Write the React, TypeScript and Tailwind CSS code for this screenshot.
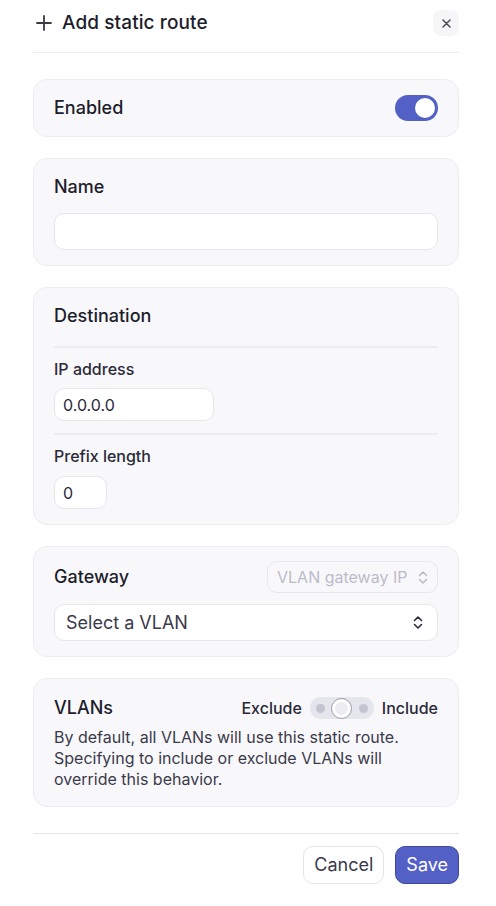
import React from "react";

function UpDown({ className = "" }: { className?: string }) {
  return (
    <svg width="10" height="15" viewBox="0 0 10 15" fill="none" className={className}>
      <path d="M1.5 5.5L5 2l3.5 3.5M1.5 9.5L5 13l3.5-3.5" stroke="currentColor" strokeWidth="1.6" strokeLinecap="round" strokeLinejoin="round" />
    </svg>
  );
}

function Card({ children, className = "" }: { children: React.ReactNode; className?: string }) {
  return (
    <div className={`rounded-[14px] border border-[#ececf1] bg-[#f8f8fb] px-5 ${className}`}>
      {children}
    </div>
  );
}

export default function App() {
  return (
    <div
      className="min-h-[906px] w-full bg-white pl-[33px] pr-[37px] text-[#1d1d2b]"
      style={{ fontFamily: "Inter, 'Noto Sans', sans-serif" }}
    >
      {/* Header */}
      <header className="flex h-[53px] items-start justify-between border-b border-[#ebebf0] pt-[10px]">
        <div className="flex items-center gap-[10px] pl-[3px] pt-[1px]">
          <svg width="16" height="16" viewBox="0 0 16 16" fill="none">
            <path d="M8 1v14M1 8h14" stroke="#3a3a48" strokeWidth="1.8" strokeLinecap="round" />
          </svg>
          <h1 className="text-[19px] font-medium leading-[24px] tracking-[0.1px] text-[#1d1d2b]">Add static route</h1>
        </div>
        <button className="flex h-[26px] w-[26px] items-center justify-center rounded-[8px] bg-[#f6f6f9]">
          <svg width="9" height="9" viewBox="0 0 9 9" fill="none">
            <path d="M1 1l7 7M8 1L1 8" stroke="#4a4a58" strokeWidth="1.5" strokeLinecap="round" />
          </svg>
        </button>
      </header>

      <div className="mt-[26px] flex flex-col gap-[21px]">
        {/* Enabled */}
        <Card className="flex h-[58px] items-center justify-between">
          <span className="text-[18px] font-medium leading-[24px]">Enabled</span>
          <div className="flex h-[26px] w-[43px] items-center justify-end rounded-full bg-[#5360c6] pr-[3px]">
            <div className="h-[20px] w-[20px] rounded-full bg-white" />
          </div>
        </Card>

        {/* Name */}
        <Card className="pb-[15px] pt-4">
          <div className="text-[18px] font-medium leading-[24px]">Name</div>
          <input className="mt-[14px] block h-[37px] w-full rounded-[10px] border border-[#e6e6ec] bg-white px-3 outline-none" />
        </Card>

        {/* Destination */}
        <Card className="pb-[15px] pt-4">
          <div className="text-[18px] font-medium leading-[24px]">Destination</div>
          <div className="mt-[18px] border-t-2 border-[#ececf1]" />
          <div className="mt-[10px] text-[16px] font-medium leading-[22px] text-[#2a2a38]">IP address</div>
          <div className="mt-[8px] flex h-[33px] w-[160px] items-center rounded-[10px] border border-[#e6e6ec] bg-white px-2 text-[16px] text-[#2a2a38]">
            0.0.0.0
          </div>
          <div className="mt-[12px] border-t-2 border-[#ececf1]" />
          <div className="mt-[10px] text-[16px] font-medium leading-[22px] text-[#2a2a38]">Prefix length</div>
          <div className="mt-[9px] flex h-[33px] w-[53px] items-center rounded-[10px] border border-[#e6e6ec] bg-white px-2 text-[16px] text-[#2a2a38]">
            0
          </div>
        </Card>

        {/* Gateway */}
        <Card className="pb-[15px] pt-[14px]">
          <div className="flex items-center justify-between">
            <span className="text-[18px] font-medium leading-[24px]">Gateway</span>
            <div className="flex h-[32px] w-[171px] items-center justify-between rounded-[10px] border border-[#e6e6ec] pl-[9px] pr-[9px] text-[16px] leading-[20px] text-[#bcbcc8]">
              <span>VLAN gateway IP</span>
              <UpDown className="text-[#bcbcc8]" />
            </div>
          </div>
          <div className="mt-[11px] flex h-[37px] items-center justify-between rounded-[10px] border border-[#e6e6ec] bg-white pl-[11px] pr-[14px] text-[18px] leading-[24px] text-[#3a3a4a]">
            <span>Select a VLAN</span>
            <UpDown className="text-[#2a2a38]" />
          </div>
        </Card>

        {/* VLANs */}
        <Card className="pb-4 pt-[15px]">
          <div className="flex h-[28px] items-center justify-between">
            <span className="text-[18px] font-medium leading-[24px]">VLANs</span>
            <div className="flex items-center gap-2 text-[16px] font-medium leading-[22px] text-[#2a2a38]">
              <span>Exclude</span>
              <div className="flex h-[22px] w-[64px] items-center justify-between rounded-full bg-[#e5e5ed] px-[6px]">
                <div className="h-[9px] w-[9px] rounded-full bg-[#c4c4d0]" />
                <div className="flex h-[21px] w-[21px] items-center justify-center rounded-full border border-[#9a9aa6] bg-white">
                  <div className="h-[13px] w-[13px] rounded-full bg-[#ececf2]" />
                </div>
                <div className="h-[9px] w-[9px] rounded-full bg-[#c4c4d0]" />
              </div>
              <span>Include</span>
            </div>
          </div>
          <p className="mt-[5px] text-[16px] leading-[21px] text-[#3a3a4a]">
            By default, all VLANs will use this static route. Specifying to include or exclude VLANs will override this behavior.
          </p>
        </Card>
      </div>

      {/* Footer */}
      <footer className="mt-[26px] flex justify-end gap-[11px] border-t border-[#e4e4ec] pt-[12px]">
        <button className="h-[38px] rounded-[10px] border border-[#e4e4ea] bg-white px-[10px] text-[18px] leading-[24px] text-[#3a3a4a]">
          Cancel
        </button>
        <button className="h-[38px] rounded-[10px] border border-[#3f4899] bg-[#5360c6] px-[10px] text-[18px] leading-[24px] text-white">
          Save
        </button>
      </footer>
    </div>
  );
}
